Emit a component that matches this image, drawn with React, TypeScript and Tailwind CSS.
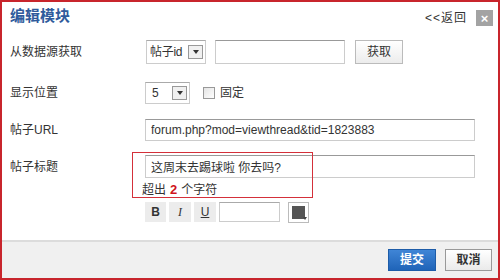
import React from 'react';

function Arrow() {
  return (
    <span className="flex h-[14px] w-[15px] shrink-0 items-center justify-center border border-[#999] bg-[#f0f0f0]">
      <span className="block h-0 w-0 border-x-[3px] border-t-[4px] border-x-transparent border-t-[#333]" />
    </span>
  );
}

function Field({ label, children }: { label: string; children: React.ReactNode }) {
  return (
    <div className="flex items-center">
      <div className="w-[135px] text-[12px] text-[#333]">{label}</div>
      {children}
    </div>
  );
}

const inputCls = 'border border-[#ccc] border-t-[#999] bg-white px-[5px] text-[12px] text-[#333] outline-none';

export default function App() {
  return (
    <div className="relative flex h-[280px] w-[500px] flex-col overflow-hidden border-2 border-[#c8252c] bg-white font-['Liberation_Sans','Noto_Sans_CJK_SC',sans-serif] text-[12px] text-[#333]">
      {/* header */}
      <div className="flex h-[38px] items-start justify-between pl-[8px] pr-[5px] pt-[4px]">
        <h2 className="text-[15px] font-bold leading-[20px] text-[#2f5b9c]">编辑模块</h2>
        <div className="flex items-center gap-[9px] pt-[3px]">
          <span className="text-[12px] tracking-[1px] text-[#333]">&lt;&lt;返回</span>
          <button className="flex h-[16px] w-[17px] items-center justify-center bg-[#a3a3a3] text-[13px] font-bold leading-none text-white">
            ×
          </button>
        </div>
      </div>

      {/* body */}
      <div className="pl-[8px]">
        <div className="h-[24px]">
          <Field label="从数据源获取">
            <div className="ml-[1px] flex h-[24px] w-[60px] items-center justify-between border border-[#ccc] border-t-[#aaa] bg-white pl-[3px] pr-[2px]">
              <span className="tracking-[-0.3px]">帖子id</span>
              <Arrow />
            </div>
            <input className={`ml-[9px] h-[24px] w-[130px] ${inputCls}`} defaultValue="" />
            <button className="ml-[10px] h-[24px] w-[48px] border border-[#bbb] bg-gradient-to-b from-white to-[#ececec] text-[12px] text-[#333]">
              获取
            </button>
          </Field>
        </div>

        <div className="mt-[18px] h-[22px]">
          <Field label="显示位置">
            <div className="flex h-[22px] w-[45px] items-center justify-between border border-[#ccc] border-t-[#aaa] bg-white pl-[6px] pr-[2px]">
              <span>5</span>
              <Arrow />
            </div>
            <span className="ml-[13px] h-[12px] w-[12px] border border-[#999] bg-gradient-to-br from-[#e4e4e4] to-white" />
            <span className="ml-[5px]">固定</span>
          </Field>
        </div>

        <div className="mt-[15px] h-[22px]">
          <Field label="帖子URL">
            <input
              className={`h-[22px] w-[330px] ${inputCls}`}
              defaultValue="forum.php?mod=viewthread&tid=1823883"
            />
          </Field>
        </div>

        <div className="mt-[14px] h-[23px]">
          <Field label="帖子标题">
            <input className={`h-[23px] w-[330px] ${inputCls}`} defaultValue="这周末去踢球啦 你去吗?" />
          </Field>
        </div>

        <div className="mt-[3px] flex h-[17px] items-center pl-[132px] text-[12px]">
          超出 <b className="mx-[4px] text-[13px] text-[#d0141c]">2</b>个字符
        </div>

        <div className="mt-[4px] flex h-[20px] items-center pl-[135px]">
          <span className="flex h-[20px] w-[21px] items-center justify-center bg-[#ececec] font-bold">B</span>
          <span className="ml-[3px] flex h-[20px] w-[22px] items-center justify-center bg-[#ececec] font-['Liberation_Serif',serif] italic">I</span>
          <span className="ml-[3px] flex h-[20px] w-[22px] items-center justify-center bg-[#ececec] underline">U</span>
          <span className="ml-[3px] h-[20px] w-[61px] border border-[#ccc] border-t-[#aaa] bg-white" />
          <span className="relative ml-[8px] flex h-[21px] w-[21px] items-center justify-center border border-[#bbb] bg-white">
            <span className="h-[13px] w-[13px] bg-[#555]" />
            <span className="absolute bottom-[2px] right-[1px] h-0 w-0 border-x-[2px] border-t-[3px] border-x-transparent border-t-[#444]" />
          </span>
        </div>
      </div>

      {/* highlight annotation */}
      <div className="absolute left-[130px] top-[150px] h-[46px] w-[181px] border border-[#d4303a]" />

      {/* footer */}
      <div className="mt-auto flex h-[38px] items-center justify-end gap-[9px] border-t-2 border-[#dcdcdc] bg-[#f0f0f0] pr-[6px]">
        <button className="h-[22px] w-[48px] border border-[#1d5ca8] bg-gradient-to-b from-[#3f85d6] to-[#1f64b8] text-[12px] font-bold text-white">
          提交
        </button>
        <button className="h-[22px] w-[47px] border border-[#999] bg-gradient-to-b from-white to-[#eaeaea] text-[12px] font-bold text-[#333]">
          取消
        </button>
      </div>
    </div>
  );
}
